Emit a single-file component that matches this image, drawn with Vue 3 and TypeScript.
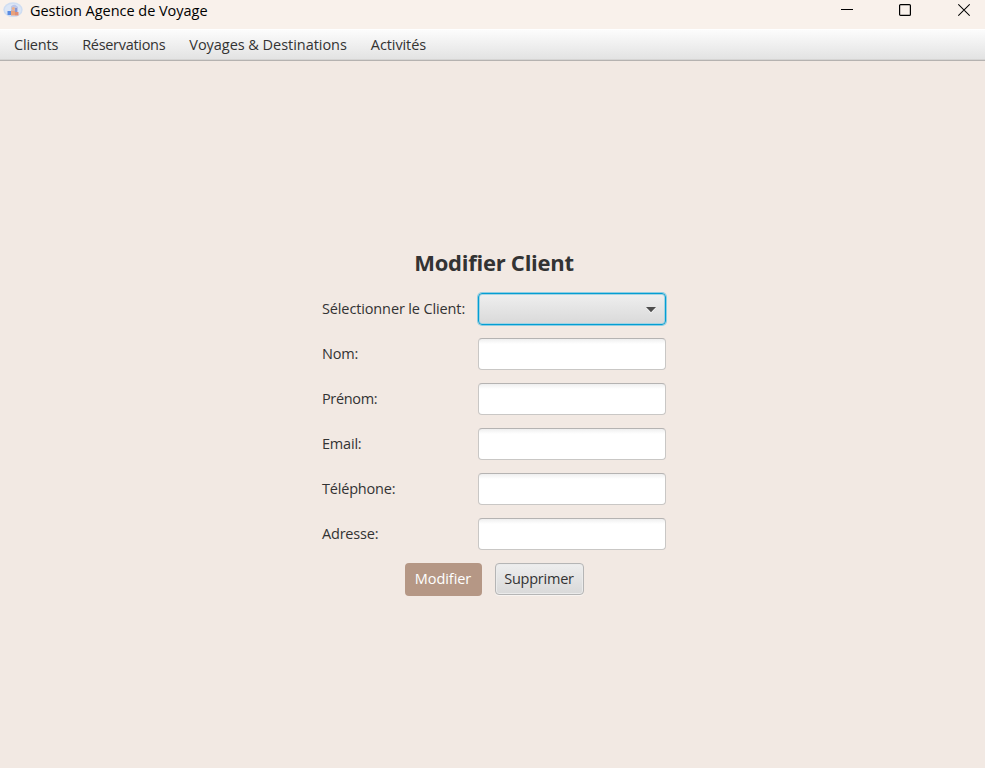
<script setup lang="ts">
import { reactive } from 'vue'

interface Field {
  key: string
  label: string
}

const menus: string[] = ['Clients', 'Réservations', 'Voyages & Destinations', 'Activités']

const fields: Field[] = [
  { key: 'nom', label: 'Nom:' },
  { key: 'prenom', label: 'Prénom:' },
  { key: 'email', label: 'Email:' },
  { key: 'telephone', label: 'Téléphone:' },
  { key: 'adresse', label: 'Adresse:' },
]

const client = reactive<Record<string, string>>({
  nom: '',
  prenom: '',
  email: '',
  telephone: '',
  adresse: '',
})
</script>

<template>
  <div class="window">
    <header class="titlebar">
      <svg class="app-icon" width="20" height="16" viewBox="0 0 20 16">
        <ellipse cx="10" cy="7.7" rx="9.7" ry="7.4" fill="#cfddf2" />
        <ellipse cx="10" cy="7.7" rx="8.2" ry="6" fill="#dce6f6" />
        <path d="M8 7V4.5Q10 2 12.5 3L15 5V13H8Z" fill="#bcc5e6" />
        <path d="M4.5 9H8V13H4.5Z" fill="#5b8ce2" />
        <path d="M8 8.5H12V13.5H8Z" fill="#e8a27c" />
        <path d="M12 10H15.5V13.5H12Z" fill="#e08d74" />
        <circle cx="10.3" cy="6.5" r="1.6" fill="#efb08a" />
        <path d="M12 6H14V10H12Z" fill="#8998d2" />
      </svg>
      <span class="app-title">Gestion Agence de Voyage</span>
      <div class="controls">
        <svg width="12" height="14" viewBox="0 0 12 14"><path d="M0 6.5H12" stroke="#000" /></svg>
        <svg width="12" height="14" viewBox="0 0 12 14">
          <rect x=".6" y="1.6" width="10.8" height="10.8" rx="1" fill="none" stroke="#000" stroke-width="1.2" />
        </svg>
        <svg width="12" height="14" viewBox="0 0 12 14">
          <path d="M.3 1.3L11.7 12.7M11.7 1.3L.3 12.7" stroke="#000" stroke-width="1.1" />
        </svg>
      </div>
    </header>

    <nav class="menubar">
      <span v-for="(menu, i) in menus" :key="menu" class="menu" :class="'menu-' + i">{{ menu }}</span>
    </nav>

    <main class="content">
      <h1 class="heading">Modifier Client</h1>
      <form class="form" @submit.prevent>
        <span class="label label-select">Sélectionner le Client:</span>
        <div class="combo" tabindex="0">
          <svg width="10" height="7" viewBox="0 0 10 7">
            <path d="M0 1H10L5 6.5Z" fill="#f5f5f5" />
            <path d="M0 0H10L5 5.3Z" fill="#4d4d4d" />
          </svg>
        </div>
        <template v-for="field in fields" :key="field.key">
          <label class="label" :class="'label-' + field.key" :for="field.key">{{ field.label }}</label>
          <input :id="field.key" v-model="client[field.key]" class="field" type="text" />
        </template>
      </form>
      <div class="actions">
        <button class="button primary" type="button">Modifier</button>
        <button class="button secondary" type="button">Supprimer</button>
      </div>
    </main>
  </div>
</template>

<style>
body {
  margin: 0;
  background: #f2e9e3;
}
</style>

<style scoped>
.window {
  display: flex;
  flex-direction: column;
  width: 100%;
  height: 768px;
  overflow: hidden;
  background: #f2e9e3;
  color: #333;
  font: 14.5px/20px 'Open Sans', 'Noto Sans', sans-serif;
  letter-spacing: -0.2px;
}
.titlebar {
  display: flex;
  box-sizing: border-box;
  height: 29px;
  padding: 0 15px 0 3px;
  background: #f9f1eb;
  color: #000;
}
.app-icon {
  margin: 2px 7px 0 0;
}
.app-title {
  margin-top: 1px;
  letter-spacing: -0.03px;
  white-space: nowrap;
}
.controls {
  display: grid;
  grid-template-columns: 58px 59px 12px;
  margin: 3px 0 0 auto;
}
.menubar {
  display: flex;
  gap: 24px;
  box-sizing: border-box;
  height: 32px;
  padding: 6px 14px 0;
  border-bottom: 1px solid #b5b2b0;
  background: linear-gradient(#fdfdfd, #e2e2e2);
  box-shadow: inset 0 1px #fff, inset 0 -1px #d5d4d3;
}
.menu {
  white-space: nowrap;
}
.menu-1 {
  letter-spacing: -0.3px;
}
.menu-2 {
  letter-spacing: -0.04px;
}
.menu-3 {
  letter-spacing: -0.1px;
}
.content {
  display: flex;
  flex: 1;
  flex-direction: column;
  align-items: center;
  padding: 186px 0 0 3px;
}
.heading {
  margin: 0 0 16px;
  font-size: 22px;
  font-weight: 700;
  line-height: 30px;
  letter-spacing: -0.25px;
}
.form {
  display: grid;
  grid-template-columns: 143px 188px;
  grid-auto-rows: 32px;
  gap: 13px;
}
.label {
  align-self: center;
  white-space: nowrap;
}
.label-select {
  letter-spacing: -0.13px;
}
.label-prenom {
  letter-spacing: -0.35px;
}
.combo {
  display: flex;
  align-items: center;
  justify-content: flex-end;
  box-sizing: border-box;
  padding: 2px 9px 0 0;
  border: 1px solid #039ed3;
  border-radius: 4px;
  outline: none;
  background: linear-gradient(#efefef, #d9d9d9);
  box-shadow: 0 0 0 1px #8fcde2, inset 0 0 0 1px #a4d3e2;
}
.field {
  box-sizing: border-box;
  width: 188px;
  height: 32px;
  padding: 0 9px;
  border: 1px solid #c9c7c5;
  border-top-color: #b5b3b2;
  border-radius: 4px;
  outline: none;
  background: linear-gradient(#efefef, #fff 5px);
  font: inherit;
}
.actions {
  display: flex;
  gap: 13px;
  margin-top: 13px;
}
.button {
  box-sizing: border-box;
  height: 32px;
  padding: 0;
  border: 1px solid #b5b5b5;
  border-radius: 4px;
  font: inherit;
  letter-spacing: -0.25px;
  white-space: nowrap;
}
.primary {
  width: 77px;
  height: 33px;
  padding-bottom: 1px;
  border: 0;
  background: #b59785;
  color: #fff;
  letter-spacing: -0.05px;
}
.secondary {
  width: 89px;
  background: linear-gradient(#eee, #d9d9d9);
  box-shadow: inset 0 0 0 1px #ebebeb, 0 1px #f8f4f1;
  color: #333;
}
</style>
